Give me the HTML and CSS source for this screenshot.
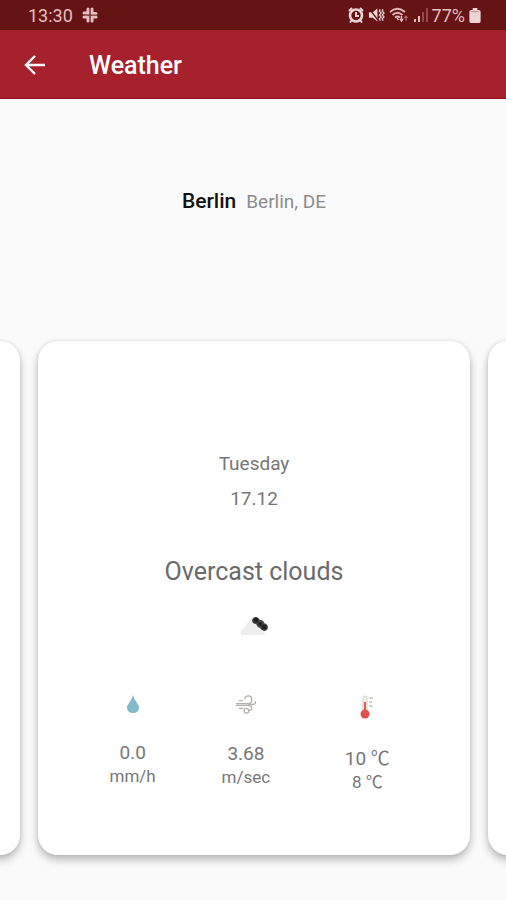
FILE: index.html
```html
<!doctype html>
<html lang="en">
    <head>
        <meta charset="UTF-8">
        <meta name="viewport" content="width=device-width, initial-scale=1">
        <title>Weather</title>
        <link rel="stylesheet" href="styles.css">
    </head>
    <body>
        <div class="status-bar">
            <span class="time">13:30</span>
            <svg class="slack" width="16" height="16" viewBox="0 0 16 16" fill="none" stroke="#e3bfc0" stroke-width="3" stroke-linecap="round">
                <path d="M6 2v4.500M2 6h4M10 2v4M10 6.500h4M6 10v4M2 10h4M10 10v4M10 10h4"/>
                <path d="M8 1v14M1 8h14" stroke="#8a4447" stroke-width="1" stroke-linecap="butt"/>
            </svg>
            <div class="status-icons">
                <!-- alarm -->
                <svg width="16" height="16" viewBox="0 0 16 16">
                    <circle cx="8" cy="8.5" r="6" fill="none" stroke="#eed5d4" stroke-width="2.6"/>
                    <path d="M1 4l3-3M15 4l-3-3M3.500 13.500L2 15.500M12.500 13.500L14 15.500M8 5v4h3" fill="none" stroke="#eed5d4" stroke-width="2"/>
                </svg>
                <!-- sound off, vibrate -->
                <svg width="17" height="16" viewBox="0 0 18 16">
                    <path d="M1 5h4l5-4v14l-5-4H1z" fill="#eed5d4"/>
                    <path d="M1 1l10 13" stroke="#661316" stroke-width="1.500"/>
                    <path d="M13 2l-1 2 2 2-2 2 2 2-2 2 1 2M16 2l-1 2 2 2-2 2 2 2-2 2 1 2" fill="none" stroke="#eed5d4" stroke-width="1.300"/>
                </svg>
                <!-- wifi -->
                <svg width="20" height="16" viewBox="0 0 20 16" fill="none" stroke="#dfb9b9" stroke-width="1.800">
                    <path d="M1 5q7-6.500 15 0M3.500 8q5-4.500 10 0M6 10.500q2.500-2 5 0"/>
                    <path d="M8 11l1.500 2M12.500 9v5M11 12l1.500 2 1.500-2" stroke-width="1.500"/>
                    <path d="M17 14V9M15.500 11L17 9l1.500 2" stroke="#a86668" stroke-width="1.300"/>
                </svg>
                <!-- signal -->
                <svg width="15" height="16" viewBox="0 0 15 16">
                    <path d="M1 12h2v3H1zM5 9h2v6H5z" fill="#e3bfc0"/>
                    <path d="M9 5h2v10H9zM13 1h2v14h-2z" fill="#93484b"/>
                </svg>
                <span class="percent">77%</span>
                <svg width="12" height="15" viewBox="0 0 12 16">
                    <path d="M3.500 0h5v2H10q2 0 2 2v10q0 2-2 2H2q-2 0-2-2V4q0-2 2-2h1.500z" fill="#eed5d4"/>
                    <path d="M2 4h8" stroke="#b98485"/>
                </svg>
            </div>
        </div>
        <header class="toolbar">
            <button class="back" type="button" aria-label="Back">
                <svg width="22" height="20" viewBox="0 0 22 20" fill="none" stroke="#fff" stroke-width="2.400">
                    <path d="M21 10H2M11 1L2 10l9 9"/>
                </svg>
            </button>
            <h1 class="title">Weather</h1>
        </header>
        <main>
            <div class="place">
                <h2 class="city">Berlin</h2>
                <span class="region">Berlin, DE</span>
            </div>
            <div class="carousel">
                <section class="card"></section>
                <section class="card">
                    <p class="day">Tuesday</p>
                    <p class="date">17.12</p>
                    <h3 class="summary">Overcast clouds</h3>
                    <svg class="cloud" width="28" height="20" viewBox="0 0 28 20">
                        <path d="M2 19q-2-1-1-4 1-3 4-4 2-6 7-8 5 0 8 6 5 3 5 7 0 2-2 3z" fill="#eee"/>
                        <path d="M12 4q1-3 4-3 2 0 4 3 4 0 4 3 4 1 4 5-1 3-4 3-3-1-4-3-3-1-4-4-4 0-4-4z" fill="#444"/>
                        <circle cx="16" cy="4" r="2.500" fill="#222"/>
                        <circle cx="20" cy="8" r="2" fill="#222"/>
                        <circle cx="24" cy="11" r="2.500" fill="#222"/>
                    </svg>
                    <div class="stats">
                        <div class="stat">
                            <svg width="14" height="20" viewBox="0 0 14 20">
                                <path d="M7 1q1 4 4 8 2 3 2 4 0 6-6 6t-6-6q0-1 2-4 3-4 4-8z" fill="#82b9cb"/>
                            </svg>
                            <p class="value">0.0</p>
                            <p class="unit">mm/h</p>
                        </div>
                        <div class="stat">
                            <!-- wind -->
                            <svg width="22" height="21" viewBox="0 0 22 22" fill="none" stroke="#b3b1ad" stroke-width="1.400" stroke-linecap="round">
                                <path d="M1 10h12q4 0 4-4t-3.500-4Q10 2 10 5M4 7h3M14 11h4q3 0 3-3M1 12h12q4 0 4 3 0 2-2 2M4 15h4M11 15q-2 0-2 2.500t2.500 2.500 2.500-2.500-3-2.500"/>
                            </svg>
                            <p class="value">3.68</p>
                            <p class="unit">m/sec</p>
                        </div>
                        <div class="stat">
                            <!-- thermometer -->
                            <svg width="18" height="26" viewBox="0 0 18 26">
                                <path d="M5 16V4q0-2 2-2t2 2v12" fill="#f3f1e6" stroke="#d2cfc2"/>
                                <path d="M7 8v12" stroke="#d9605a" stroke-width="2"/>
                                <circle cx="7" cy="20" r="4.500" fill="#e0514d"/>
                                <path d="M11 4h4M11 8h3M11 12h4" stroke="#c9c4bb" stroke-width="1.300"/>
                            </svg>
                            <p class="value">10 ℃</p>
                            <p class="unit">8 ℃</p>
                        </div>
                    </div>
                </section>
                <section class="card"></section>
            </div>
        </main>
    </body>
</html>
```
FILE: styles.css
```css
*{
    margin: 0;
    padding: 0;
    box-sizing: border-box;
}
body{
    background-color: #fafafa;
    color: #777;
    font-family: Roboto, "Noto Sans CJK SC", sans-serif;
}
svg{
    display: block;
    flex: none;
}
.status-bar{
    display: flex;
    align-items: center;
    height: 30px;
    padding: 0 25px 0 28px;
    background-color: #661316;
    color: #e3bfc0;
    font-size: 18px;
}
.slack{
    margin-left: 9px;
}
.status-icons{
    display: flex;
    align-items: center;
    gap: 4px;
    margin-left: auto;
}
.toolbar{
    display: flex;
    align-items: center;
    height: 69px;
    padding: 2px 24px 0;
    border-bottom: 1px solid #931520;
    background-color: #a6212c;
    color: #fff;
}
.back{
    border: none;
    background: none;
    cursor: pointer;
}
.title{
    margin-left: 43px;
    font-size: 25px;
    font-weight: 500;
}
main{
    overflow: hidden;
    padding-bottom: 43px;
}
.place{
    display: flex;
    justify-content: center;
    align-items: baseline;
    gap: 10px;
    padding: 89px 0 126px 2px;
    line-height: 26px;
}
.city{
    color: #111;
    font-size: 21px;
    font-weight: 500;
}
.region{
    color: #8c8c8c;
    font-size: 19px;
}
.carousel{
    display: flex;
    justify-content: center;
    gap: 18px;
    padding-left: 2px;
}
.card{
    flex: 0 0 calc(100% - 72px);
    padding: 110px 38px 62px;
    border-radius: 20px;
    background-color: #fff;
    box-shadow: 0 5px 9px rgba(0,0,0,0.25), 0 0 4px rgba(0,0,0,0.1);
    text-align: center;
}
.day,
.date{
    font-size: 19px;
    line-height: 26px;
}
.date{
    margin-top: 9px;
}
.summary{
    margin-top: 44px;
    color: #6a6a6a;
    font-size: 25px;
    font-weight: 400;
    line-height: 32px;
}
.cloud{
    margin: 28px auto 0;
}
.stats{
    display: grid;
    grid-template-columns: 7fr 7fr 8fr;
    margin-top: 58px;
}
.stat svg{
    margin: 0 auto 27px;
}
.value{
    font-size: 19px;
    line-height: 24px;
}
.unit{
    font-size: 17px;
    line-height: 22px;
}
```
